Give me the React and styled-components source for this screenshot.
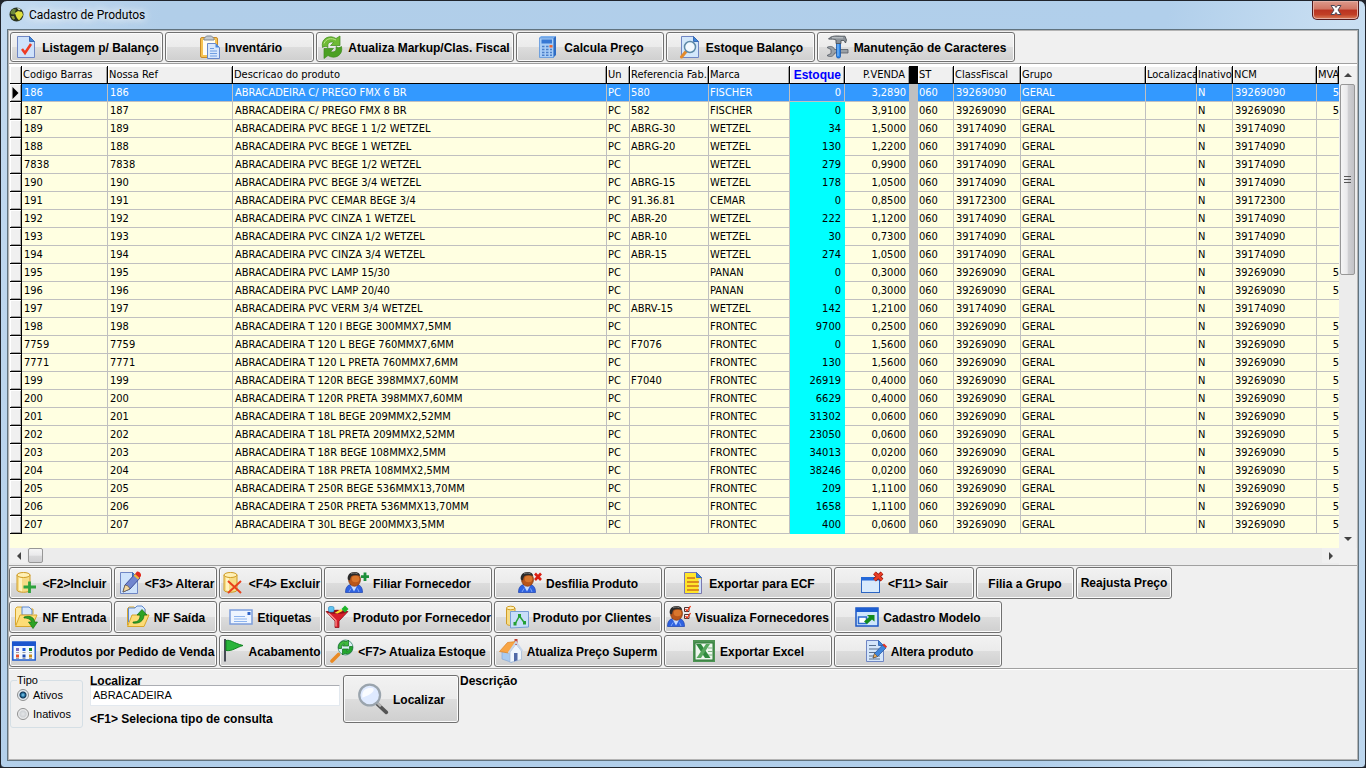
import React from 'react';
import styled, { createGlobalStyle, css } from 'styled-components';

const GlobalStyle = createGlobalStyle`
  *, *::before, *::after { box-sizing: border-box; }
  html, body { margin: 0; background: #20242c; }
  button, input { font: inherit; color: inherit; }
`;

const uiFont = '"Liberation Sans", Arial, sans-serif';
const gridFont = '"DejaVu Sans Condensed", "DejaVu Sans", Tahoma, sans-serif';

/* ---------- window frame ---------- */

const Window = styled.main`
  min-height: 100vh;
  display: flex;
  flex-direction: column;
  padding: 0 6px 6px;
  border: 1px solid #20242c;
  border-radius: 7px 7px 4px 4px;
  background: linear-gradient(100deg, #c3daf0 0, #b1cee9 160px, #b1cfeb 78%, #c9dff2 90%, #bcd6ee 100%);
  font: 12px/16px ${uiFont};
  color: #000;
`;

const TitleBar = styled.header`
  display: flex;
  align-items: flex-start;
  height: 28px;
  padding-left: 2px;
`;

const TitleText = styled.h1`
  flex: 1;
  margin: 0;
  padding: 6px 0 0 5px;
  font: 12px/16px Roboto, "Open Sans", sans-serif;
  color: #000;
  text-shadow: 0 0 8px #fff, 0 0 8px #fff;
`;

const TitleIcon = styled.span`
  display: flex;
  padding-top: 6px;
`;

const CloseButton = styled.button`
  display: flex;
  align-items: center;
  justify-content: center;
  width: 47px;
  height: 19px;
  padding: 0;
  border: 1px solid #521a1c;
  border-top: 0;
  border-radius: 0 0 5px 5px;
  box-shadow: inset 0 0 0 1px #e5aea3;
  background: linear-gradient(#dd9a8c 0, #d17563 45%, #b93321 50%, #c13f26 75%, #d9805c 100%);
`;

const Client = styled.div`
  flex: 1;
  display: flex;
  flex-direction: column;
  min-width: 0;
  border: 1px solid #61737f;
  background: #f0f0f0;
  box-shadow: inset 0 0 0 1px #b4b4b4;
  padding: 1px;
`;

/* ---------- buttons ---------- */

const PushButton = styled.button`
  display: flex;
  flex: none;
  align-items: center;
  justify-content: center;
  gap: 4px;
  width: ${(p) => p.$w}px;
  height: ${(p) => p.$h || 32}px;
  padding: 0;
  border: 1px solid #707070;
  border-radius: 3px;
  box-shadow: inset 0 0 0 1px #fbfbfb;
  background: linear-gradient(#f2f2f2 0, #ebebeb 49%, #dddddd 50%, #cfcfcf 100%);
  font: bold 12px/16px ${uiFont};
  color: #000;
  white-space: nowrap;

  svg { flex: none; display: block; }
`;

const ButtonLabel = styled.span`
  padding-top: ${(p) => (p.$raised ? 0 : 2)}px;
`;

const TopTools = styled.nav`
  display: flex;
  gap: 2px;
  padding: 1px;
  border-bottom: 1px solid #a0a0a0;
`;

const BottomTools = styled.nav`
  display: flex;
  flex-direction: column;
  gap: 2px;
  padding: 1px 0;
  border-top: 1px solid #a0a0a0;
  border-bottom: 1px solid #a0a0a0;
`;

const ToolRow = styled.div`
  display: flex;
  gap: 2px;
`;

/* ---------- data grid ---------- */

const GridFrame = styled.section`
  display: flex;
  border-top: 2px solid #fff;
  padding-left: 1px;
  background: #f0f0f0;
`;

const GridView = styled.div`
  flex: 1;
  min-width: 0;
  overflow: hidden;
  background: #ffffe1;
  padding-bottom: 14px;
`;

const Grid = styled.table`
  table-layout: fixed;
  width: 100%;
  border-spacing: 0;
  border-collapse: separate;
  font: 11px/16px ${gridFont};
`;

const HeadCell = styled.th`
  height: 18px;
  padding: 1px ${(p) => (p.$right ? 4 : 0)}px 0 1px;
  overflow: hidden;
  white-space: nowrap;
  font-weight: normal;
  text-align: ${(p) => (p.$right ? 'right' : 'left')};
  background: ${(p) => (p.$gap ? '#000' : '#f0f0f0')};
  border-right: 1px solid #000;
  border-bottom: 1px solid #000;
  ${(p) => !p.$gap && css`box-shadow: inset 1px 1px 0 #fff, inset -1px 0 0 #a0a0a0;`}
  ${(p) => p.$stock && css`
    font: bold 12px/16px ${uiFont};
    color: #00f;
    padding-right: 3px;
  `}
`;

const Cell = styled.td`
  height: 18px;
  padding: 1px 3px 0 2px;
  overflow: hidden;
  white-space: nowrap;
  text-align: ${(p) => (p.$right ? 'right' : 'left')};
  border-right: 1px solid #c0c0c0;
  border-bottom: 1px solid #c0c0c0;
  ${(p) => p.$tight && css`padding-left: 1px;`}
  ${(p) => p.$stock && css`background: #0ff; border-color: #0ff;`}
  ${(p) => p.$gap && css`background: #c0c0c0;`}
  ${(p) => p.$last && css`padding-right: 0; border-right: 0;`}
`;

const MarkCell = styled.td`
  height: 18px;
  padding: 0 0 0 2px;
  background: #f0f0f0;
  border-right: 1px solid #000;
  border-bottom: 1px solid #000;
  box-shadow: inset 1px 1px 0 #fff, inset -1px -1px 0 #a0a0a0;

  svg { display: block; }
`;

const Row = styled.tr`
  ${(p) => p.$selected && css`
    color: #fff;
    ${Cell} { background: #39f; border-color: #c0c0c0; }
    ${Cell}[data-gap] { background: #c0c0c0; }
  `}
`;

const VScroll = styled.div`
  display: flex;
  flex-direction: column;
  width: 18px;
  background: #ececec;
`;

const VThumb = styled.div`
  display: flex;
  align-items: center;
  justify-content: center;
  height: 191px;
  margin: 0 2px 0 1px;
  border: 1px solid #979797;
  border-radius: 2px;
  background: linear-gradient(90deg, #f5f5f5 0, #e9e9eb 48%, #d0d0d3 55%, #c2c2c6 100%);
`;

const Spacer = styled.div`
  flex: 1;
`;

const ScrollArrow = styled.button`
  display: flex;
  flex: none;
  align-items: center;
  justify-content: center;
  width: 17px;
  height: ${(p) => (p.$wide ? 15 : 18)}px;
  padding: 0;
  border: 0;
  background: #f0f0f0;
`;

const HScroll = styled.div`
  display: flex;
  height: 17px;
  margin-right: 18px;
  padding-left: 1px;
  background: #ececec;
`;

const HThumb = styled.div`
  width: 15px;
  height: 15px;
  margin-left: 1px;
  border: 1px solid #979797;
  border-radius: 2px;
  background: linear-gradient(#f5f5f5 0, #e9e9eb 48%, #d8d8da 55%, #cfcfd2 100%);
`;

/* ---------- search panel ---------- */

const SearchPanel = styled.form`
  flex: 1;
  display: flex;
  align-items: flex-start;
  padding: 5px 1px;
  border-top: 1px solid #fff;
`;

const TypeGroup = styled.fieldset`
  width: 73px;
  height: 53px;
  margin: 0 7px 0 0;
  padding: 0 0 0 6px;
  border: 1px solid #d5dfe5;
  border-radius: 3px;
  font: 11px/10px ${uiFont};

  legend { padding: 0 2px 0 0; }
`;

const RadioLabel = styled.label`
  display: flex;
  align-items: center;
  gap: 4px;
  height: 19px;
`;

const Radio = styled.input`
  appearance: none;
  width: 12px;
  height: 12px;
  margin: 0;
  border: 1px solid #8e8f8f;
  border-radius: 50%;
  background: radial-gradient(#e4e6e8 0, #d0d3d6 3px, #f4f4f4 5px);

  &:checked {
    background: radial-gradient(circle at 50% 50%, #8fd6f5 0, #1f6d9d 2px, #12324f 3px, #e4ecf2 4px);
  }
`;

const SearchField = styled.div`
  display: flex;
  flex-direction: column;
  width: 250px;
  margin-right: 3px;

  label, p { margin: 0; font-weight: bold; }
  label { height: 10px; line-height: 12px; }
  p { padding-top: 5px; }
`;

const SearchInput = styled.input`
  height: 21px;
  padding: 0 2px 2px;
  border: 1px solid #e3e9ef;
  border-top-color: #abadb3;
  border-radius: 1px;
  background: #fff;
  font: 11px/16px ${uiFont};
`;

const Description = styled.strong`
  padding-left: 1px;
  line-height: 12px;
`;

/* ---------- icons ---------- */

const Svg = ({ size = 24, children }) => (
  <svg width={size} height={size} viewBox="0 0 24 24" aria-hidden="true">{children}</svg>
);

const Sheet = ({ fill = '#cfe2fb' }) => (
  <>
    <path d="M3.500 1.500H15.500L20.500 6.500V22.500H3.500Z" fill={fill} stroke="#6f86c4" />
    <path d="M15.500 1.500V6.500H20.500Z" fill="#3f86d8" stroke="#3a6cb8" />
  </>
);

const Cylinder = () => (
  <>
    <path d="M3 4V19C3 22 16 22 16 19V4Z" fill="#f7dc86" stroke="#cf9c26" />
    <path d="M5 6V19L8 20.500V7Z" fill="#fff3c0" />
    <ellipse cx="9.500" cy="4" rx="6.500" ry="2.500" fill="#fff0b5" stroke="#cf9c26" />
  </>
);

const Person = () => (
  <>
    <path d="M0.500 21.500C0.500 16 3 13.500 7 13.500H11C15 13.500 17.500 16 17.500 21.500Z" fill="#2f62e0" stroke="#1a3fae" strokeWidth=".7" />
    <path d="M5.500 14H12.500L9 20.500Z" fill="#c9dcff" />
    <path d="M4 21L6 17.500M14 21L12.500 17.500" stroke="#7fa4f5" />
    <ellipse cx="9.500" cy="8.500" rx="6" ry="6.800" fill="#b9561a" stroke="#7c330c" strokeWidth=".7" />
    <ellipse cx="10.500" cy="8" rx="3.800" ry="3.200" fill="#d9762c" />
    <path d="M2.800 8.500C2 4 5 1 9.500 1C13 1 15 2.500 15.200 5C12.500 3.800 10.500 4.500 8 4.500C6 4.800 5.500 6.500 5 9.500Z" fill="#2b2a2a" />
    <path d="M6 2.800C8 1.800 10.500 1.800 12.500 2.800" fill="none" stroke="#8a8a8a" strokeWidth=".8" />
  </>
);

const Folder = ({ children }) => (
  <>
    <path d="M1.500 20V3.500L3 2H8L9.500 4H19V9" fill="#ffe9a0" stroke="#d8a62c" />
    {children}
    <path d="M1.500 21.500L6 10H23L18 21.500Z" fill="#fddc76" stroke="#d8a62c" />
  </>
);

const icons = {
  check: <><Sheet /><path d="M8 14L11 18L17 9" fill="none" stroke="#ee3b24" strokeWidth="2.500" /></>,
  clipboard: (
    <>
      <rect x="3.500" y="2.500" width="17" height="20" rx="1.500" fill="#f6c352" stroke="#c88a28" />
      <path d="M6 5H18V20H6Z" fill="#fffdf5" />
      <path d="M7 5V3.500L9.500 1H14.500L17 3.500V5Z" fill="#c3cad2" stroke="#7f8993" />
      <path d="M10.500 8.500H18.500L22.500 12.500V23.500H10.500Z" fill="#d7e7fd" stroke="#6788c9" />
      <path d="M18.500 8.500V12.500H22.500Z" fill="#4b8ade" />
      <path d="M13 13.500H17M13 16H20M13 18.500H20M13 21H20" stroke="#6f9fe2" />
    </>
  ),
  refresh: (
    <>
      <path d="M2.500 12.500C0.500 4 9 -1 16 3.500L20 1V10.500H10.500L13.500 7.500C10 6 7 8 8 12.500C6 11 4.500 11 2.500 12.500Z" fill="#6fbb35" stroke="#3d8a1c" strokeWidth=".7" />
      <path d="M21.500 11.500C23.500 20 15 25 8 20.500L4 23.500V13.500H13.500L10.500 16.500C14 18 17 16 16 11.500C18 13 19.500 13 21.500 11.500Z" fill="#4ba023" stroke="#3d8a1c" strokeWidth=".7" />
      <path d="M4 8.500C6 3.500 11 2.500 16 5" fill="none" stroke="#bce58a" />
    </>
  ),
  calculator: (
    <>
      <path d="M17 3L20 1V20L17 23Z" fill="#2f6cc4" />
      <path d="M3 3L5 1H20L17.500 3Z" fill="#7eb1ee" />
      <path d="M3.500 3H17.500V22.500H3.500Z" fill="#a9cdf6" stroke="#5b94dc" strokeWidth=".8" />
      <path d="M5.500 4.500H16V8.500H5.500Z" fill="#3778d4" />
      <path d="M6 11.500H8.500M10 11.500H12.500M6 14.500H8.500M10 14.500H12.500M14 14.500H16M6 17.500H8.500M10 17.500H12.500M14 17.500H16M6 20.300H8.500M10 20.300H12.500M14 20.300H16" stroke="#4b7fc9" strokeWidth="1.600" />
      <path d="M13.500 11.300H16.500" stroke="#f0622c" strokeWidth="2.400" />
    </>
  ),
  docSearch: (
    <>
      <Sheet fill="#d3e7fb" />
      <path d="M8 16.500L3.500 22" stroke="#e28a2c" strokeWidth="3" strokeLinecap="round" />
      <circle cx="12" cy="12" r="5.500" fill="#f2f9ff" stroke="#5e8aa8" strokeWidth="1.500" />
    </>
  ),
  tools: (
    <>
      <path d="M1 12.500C4 10.500 8 11.500 8.500 14.500H22V18H8.500C8 21.500 4 22.500 1 20.500L5 18.500V14.500Z" fill="#9aa1a8" stroke="#555c64" strokeWidth=".8" />
      <path d="M10.500 7H14.500V21.500C14.500 23.500 10.500 23.500 10.500 21.500Z" fill="#2c86e8" stroke="#1656a8" strokeWidth=".8" />
      <path d="M12 8V21" stroke="#8ec4fa" />
      <path d="M2.500 4C5 .5 11 .8 15 1.200H19L20.500 5L19.500 8L18 5.500H15V8.500H10V5C7.500 3.500 5 4.500 2.500 4Z" fill="#8b9299" stroke="#464c53" strokeWidth=".8" />
      <path d="M6 2.800H17" stroke="#d5d9dd" strokeWidth=".8" />
    </>
  ),
  add: <><Cylinder /><path d="M15.500 10.500V22M9.500 16H22" stroke="#2ea33c" strokeWidth="2.800" /></>,
  remove: <><Cylinder /><path d="M7 10L20 22M20 10L7 22" stroke="#e8401c" strokeWidth="2" /></>,
  edit: (
    <>
      <Sheet fill="#cfe3fb" />
      <path d="M6 21L8 14L18 3L23 7L13 18Z" fill="#7186cf" stroke="#40509a" />
      <path d="M6 21L8 14L11 15L13 18Z" fill="#f4d9a0" stroke="#5a4a30" strokeWidth=".6" />
      <path d="M18 3L20 .5C22 0 25 3 24 5L22.500 7Z" fill="#e12a1c" />
      <path d="M16.500 4.500L18 3L22.500 7L21 8.500Z" fill="#f2b93a" />
    </>
  ),
  userAdd: <><Person /><path d="M20 1.500V10M16 5.700H24" stroke="#1c8f3a" strokeWidth="2.800" /></>,
  userRemove: <><Person /><path d="M17 2.500L23 9M23 2.500L17 9" stroke="#dc1e12" strokeWidth="2.600" /></>,
  userList: (
    <>
      <Person />
      <path d="M17.500 2.500H22V6.500H17.500ZM17.500 9.500H22V13.500H17.500Z" fill="#fff" stroke="#4b3434" />
      <path d="M18.500 4L20 6L23.500 1M18.500 11L20 13L23.500 8" fill="none" stroke="#ee3a1a" strokeWidth="1.300" />
    </>
  ),
  ecf: (
    <>
      <path d="M3.500 1.500H15.500L20.500 6.500V22.500H3.500Z" fill="#ffe62a" stroke="#7b78b0" />
      <path d="M17.500 8V22H20V8Z" fill="#cfe2fb" />
      <path d="M15.500 1.500V6.500H20.500Z" fill="#3f86d8" stroke="#3a6cb8" />
      <path d="M6 7H14M6 11H18M6 15H18M6 19H18" stroke="#d0701a" strokeWidth="1.300" />
    </>
  ),
  exit: (
    <>
      <rect x="1.500" y="6.500" width="18" height="15" fill="#d8eafc" stroke="#2c66c4" />
      <path d="M1 6H20V9.500H1Z" fill="#2468d8" />
      <path d="M14.500 2L22 9M22 2L14.500 9" stroke="#8e160d" strokeWidth="4" />
      <path d="M14.500 2L22 9M22 2L14.500 9" stroke="#ea3c24" strokeWidth="2.400" />
    </>
  ),
  folderIn: (
    <>
      <Folder><path d="M8 10V2H15L18 5V10Z" fill="#d8e8fd" stroke="#5f88cc" /></Folder>
      <path d="M10 12C16 10 20.500 12.500 20.500 17H23.500L19 23.500L14.500 17H17.500C17 14.500 14 13 10 13Z" fill="#2da324" stroke="#157015" strokeWidth=".7" />
    </>
  ),
  folderOut: (
    <>
      <Folder><path d="M2.500 17V3H9L11 1H16L19 4V11Z" fill="#d8e8fd" stroke="#5f88cc" /></Folder>
      <path d="M7 17C13 17 14 14 14 10H11L16 4.500L21 10H18C18 16 13 19 7 18Z" fill="#2da324" stroke="#157015" strokeWidth=".7" />
    </>
  ),
  envelope: (
    <>
      <rect x="1" y="5" width="22" height="14" fill="#eef5ff" stroke="#7c9ddb" strokeWidth="1.500" />
      <path d="M5 11.500H16M5 14H18M5 16.500H18" stroke="#8db4ee" />
      <path d="M18.500 7H21.500V10H18.500Z" fill="#2d63c8" />
    </>
  ),
  funnel: (
    <>
      <path d="M1 6.500L10 16V22.500H14V16L23 6.500Z" fill="#d81f2c" stroke="#8f0f18" strokeWidth=".8" />
      <path d="M3.500 8L11 15.500V21.500" fill="none" stroke="#ff9a94" strokeWidth="1.200" />
      <ellipse cx="12" cy="6.800" rx="10" ry="2" fill="#8f0f18" />
      <rect x="3.500" y="1.500" width="5.500" height="5.500" rx="1.500" fill="#5fc3f0" stroke="#2581b8" strokeWidth=".6" />
      <path d="M9.500 8L16 4L17.500 6L12.500 8.500Z" fill="#ffe32e" />
      <path d="M20 0.500L23.500 4L20 7.500L16.500 4Z" fill="#1eb42c" />
    </>
  ),
  chart: (
    <>
      <path d="M1.500 3V19C3 21 9 21 10 19V3Z" fill="#f7dc86" stroke="#cf9c26" />
      <ellipse cx="5.700" cy="3" rx="4.200" ry="1.800" fill="#fff0b5" stroke="#cf9c26" />
      <path d="M5.500 6.500H23.500V22L5.500 23Z" fill="#c9def9" stroke="#789ed4" />
      <path d="M10 19L14.500 11L19.500 18" fill="none" stroke="#2aa43a" strokeWidth="1.500" />
      <path d="M8.500 17H11.500V20.500H8.500ZM13 9H16V12.500H13ZM18 16H21V19.500H18Z" fill="#24a034" />
    </>
  ),
  export: (
    <>
      <rect x="1" y="3" width="22" height="18" fill="#cfe6fc" stroke="#1b55c4" strokeWidth="1.500" />
      <path d="M1 3H23V7H1Z" fill="#1c5ed2" />
      <path d="M3.500 12H11.500V18.500H3.500Z" fill="#fff" stroke="#2c6cd0" strokeWidth="1.500" />
      <path d="M9 16.500L14 12L12 10H19.500V16.500L17 14.500L12 19Z" fill="#118a1c" />
    </>
  ),
  calendar: (
    <>
      <rect x=".8" y="3" width="22.400" height="18" fill="#f2f8ff" stroke="#1f5cd0" strokeWidth="1.500" />
      <path d="M0 3H24V7H0Z" fill="#1c56ce" />
      <path d="M5.500 9V12" stroke="#7d6cc0" strokeWidth="3" />
      <path d="M12 9V12" stroke="#1d58d6" strokeWidth="3" />
      <path d="M18.500 9V12" stroke="#11862b" strokeWidth="3" />
      <path d="M5.500 15.500V18.500" stroke="#e8502c" strokeWidth="3" />
      <path d="M12 15.500V18.500" stroke="#204ab0" strokeWidth="3" />
      <path d="M18.500 15.500V18.500" stroke="#c98c1a" strokeWidth="3" />
      <path d="M4 13.500H7M10.500 13.500H13.500M17 13.500H20M4 19.500H7M10.500 19.500H13.500M17 19.500H20" stroke="#777" strokeWidth=".7" />
    </>
  ),
  flag: (
    <>
      <path d="M5 0V22.500" stroke="#474b55" strokeWidth="2" />
      <path d="M6 1.500C11 .5 13 4 23 6.500C16 8.500 12 12.500 6 11.500Z" fill="#29b43a" stroke="#128423" />
    </>
  ),
  searchRefresh: (
    <>
      <path d="M8.500 15.500L2 22" stroke="#e98a24" strokeWidth="3.600" strokeLinecap="round" />
      <circle cx="15.500" cy="8.500" r="7.500" fill="#d9f0f4" stroke="#5a9a86" />
      <path d="M8.500 9.500C8 4 12 .8 17 2.500L18.500 1V7H12.500L14.500 5C12.500 4.800 11 6.500 11.500 9.500Z" fill="#3fba3e" stroke="#0d6a18" strokeWidth=".7" />
      <path d="M22.500 7.500C23 13 19 16 14 14.500L12.500 16V10H18.500L16.500 12C18.500 12 20 10.500 19.500 7.500Z" fill="#22a82e" stroke="#0d6a18" strokeWidth=".7" />
    </>
  ),
  house: (
    <>
      <path d="M3 12L9 6L13 13V23.500L3 20Z" fill="#a9cbf0" stroke="#86a8d6" strokeWidth=".7" />
      <path d="M11 23.500V13L17 5L22.500 12V20.500Z" fill="#eef5fd" stroke="#9db6d6" strokeWidth=".7" />
      <path d="M15.500 0H18.500V6H15.500Z" fill="#c04030" />
      <path d="M0.500 12.500L8.500 3.500L17 2.500L9.500 14Z" fill="#f8a545" stroke="#dd8020" strokeWidth=".7" />
      <path d="M9.500 14L17 3L23.500 12" fill="none" stroke="#c8d6ea" strokeWidth="1.800" />
      <path d="M15 14H18.500V21.200L15 22.500Z" fill="#4f69a8" />
    </>
  ),
  excel: (
    <>
      <rect x="1" y="1" width="22" height="22" fill="#4e9454" />
      <rect x="3" y="4" width="18" height="17" fill="#eef6ee" stroke="#2f7a39" />
      <path d="M16 9H21M16 12.500H21M16 16H21" stroke="#7eb283" />
      <path d="M4 5H9L18.500 19H13Z" fill="#2f8a3e" />
      <path d="M14 5H18L9 19H4.500Z" fill="#57a85e" />
    </>
  ),
  docEdit: (
    <>
      <Sheet fill="#d5e6fa" />
      <path d="M6 6.500H13M6 10H16M6 13.500H15M6 17H17M6 20H17" stroke="#58708f" />
      <path d="M10 19L11.500 14.500L19.500 6L23 9L14.500 17.500Z" fill="#3f86dc" stroke="#244f95" strokeWidth=".7" />
      <path d="M10 19L11.500 14.500L14.500 17.500Z" fill="#f3b25b" stroke="#533c20" strokeWidth=".5" />
      <path d="M19.500 6L21 4.500L24 7.500L23 9Z" fill="#e43320" />
    </>
  ),
  lens: (
    <>
      <path d="M15 15.500L22 22" stroke="#555" strokeWidth="2.800" strokeLinecap="round" />
      <path d="M15 14.500L18 17.500" stroke="#b5b5b5" strokeWidth="2" />
      <circle cx="9.500" cy="9" r="7.800" fill="#dfeaff" stroke="#9aa4ad" strokeWidth="1.700" />
      <path d="M4 9C4 5 8 3 12 4C14 6 10 9 4 11Z" fill="#fff" opacity=".85" />
    </>
  ),
};

const Icon = ({ name, size }) => <Svg size={size}>{icons[name]}</Svg>;

const arrowPaths = {
  up: 'M0 6L4 2L8 6Z',
  down: 'M0 2L4 6L8 2Z',
  left: 'M6 0L2 4L6 8Z',
  right: 'M2 0L6 4L2 8Z',
};

const Arrow = ({ dir }) => (
  <svg width="8" height="8" viewBox="0 0 8 8" aria-hidden="true"><path d={arrowPaths[dir]} fill="#444" /></svg>
);

/* ---------- data ---------- */

const topButtons = [
  ['check', 'Listagem p/ Balanço', 153],
  ['clipboard', 'Inventário', 149],
  ['refresh', 'Atualiza Markup/Clas. Fiscal', 198],
  ['calculator', 'Calcula Preço', 148],
  ['docSearch', 'Estoque Balanço', 149],
  ['tools', 'Manutenção de Caracteres', 198],
];

const bottomButtons = [
  [
    ['add', '<F2>Incluir', 103],
    ['edit', '<F3> Alterar', 103],
    ['remove', '<F4> Excluir', 103],
    ['userAdd', 'Filiar Fornecedor', 168],
    ['userRemove', 'Desfilia Produto', 168],
    ['ecf', 'Exportar para ECF', 168],
    ['exit', '<F11> Sair', 140],
    [null, 'Filia a Grupo', 98],
    [null, 'Reajusta Preço', 96, true],
  ],
  [
    ['folderIn', 'NF Entrada', 103],
    ['folderOut', 'NF Saída', 103],
    ['envelope', 'Etiquetas', 103],
    ['funnel', 'Produto por Fornecedor', 168],
    ['chart', 'Produto por Clientes', 168],
    ['userList', 'Visualiza Fornecedores', 168],
    ['export', 'Cadastro Modelo', 168],
  ],
  [
    ['calendar', 'Produtos por Pedido de Venda', 208],
    ['flag', 'Acabamento', 103],
    ['searchRefresh', '<F7> Atualiza Estoque', 168],
    ['house', 'Atualiza Preço Superm', 168],
    ['excel', 'Exportar Excel', 168],
    ['docEdit', 'Altera produto', 168],
  ],
];

const columnWidths = [12, 86, 125, 374, 23, 79, 81, 55, 65, 8, 36, 67, 125, 51, 36, 84];

const products = [
  ['186', 'C/ PREGO FMX 6 BR', '580', 'FISCHER', '0', '3,2890', '39269090'],
  ['187', 'C/ PREGO FMX 8 BR', '582', 'FISCHER', '0', '3,9100', '39269090'],
  ['189', 'PVC BEGE 1 1/2 WETZEL', 'ABRG-30', 'WETZEL', '34', '1,5000', '39174090'],
  ['188', 'PVC BEGE 1 WETZEL', 'ABRG-20', 'WETZEL', '130', '1,2200', '39174090'],
  ['7838', 'PVC BEGE 1/2 WETZEL', '', 'WETZEL', '279', '0,9900', '39174090'],
  ['190', 'PVC BEGE 3/4 WETZEL', 'ABRG-15', 'WETZEL', '178', '1,0500', '39174090'],
  ['191', 'PVC CEMAR BEGE 3/4', '91.36.81', 'CEMAR', '0', '0,8500', '39172300'],
  ['192', 'PVC CINZA 1 WETZEL', 'ABR-20', 'WETZEL', '222', '1,1200', '39174090'],
  ['193', 'PVC CINZA 1/2 WETZEL', 'ABR-10', 'WETZEL', '30', '0,7300', '39174090'],
  ['194', 'PVC CINZA 3/4 WETZEL', 'ABR-15', 'WETZEL', '274', '1,0500', '39174090'],
  ['195', 'PVC LAMP 15/30', '', 'PANAN', '0', '0,3000', '39269090'],
  ['196', 'PVC LAMP 20/40', '', 'PANAN', '0', '0,3000', '39269090'],
  ['197', 'PVC VERM 3/4 WETZEL', 'ABRV-15', 'WETZEL', '142', '1,2100', '39174090'],
  ['198', 'T 120 I BEGE 300MMX7,5MM', '', 'FRONTEC', '9700', '0,2500', '39269090'],
  ['7759', 'T 120 L BEGE 760MMX7,6MM', 'F7076', 'FRONTEC', '0', '1,5600', '39269090'],
  ['7771', 'T 120 L PRETA 760MMX7,6MM', '', 'FRONTEC', '130', '1,5600', '39269090'],
  ['199', 'T 120R BEGE 398MMX7,60MM', 'F7040', 'FRONTEC', '26919', '0,4000', '39269090'],
  ['200', 'T 120R PRETA 398MMX7,60MM', '', 'FRONTEC', '6629', '0,4000', '39269090'],
  ['201', 'T 18L BEGE 209MMX2,52MM', '', 'FRONTEC', '31302', '0,0600', '39269090'],
  ['202', 'T 18L PRETA 209MMX2,52MM', '', 'FRONTEC', '23050', '0,0600', '39269090'],
  ['203', 'T 18R BEGE 108MMX2,5MM', '', 'FRONTEC', '34013', '0,0200', '39269090'],
  ['204', 'T 18R PRETA 108MMX2,5MM', '', 'FRONTEC', '38246', '0,0200', '39269090'],
  ['205', 'T 250R BEGE 536MMX13,70MM', '', 'FRONTEC', '209', '1,1100', '39269090'],
  ['206', 'T 250R PRETA 536MMX13,70MM', '', 'FRONTEC', '1658', '1,1100', '39269090'],
  ['207', 'T 30L BEGE 200MMX3,5MM', '', 'FRONTEC', '400', '0,0600', '39269090'],
];

/* ---------- parts ---------- */

const ToolButtons = ({ items, height }) =>
  items.map(([icon, label, width, raised]) => (
    <PushButton key={label} type="button" $w={width} $h={height}>
      {icon && <Icon name={icon} />}
      <ButtonLabel $raised={raised}>{label}</ButtonLabel>
    </PushButton>
  ));

const ProductRow = ({ data, selected }) => {
  const [code, name, ref, brand, stock, price, ncm] = data;
  return (
    <Row $selected={selected}>
      <MarkCell>
        {selected && (
          <svg width="7" height="12" viewBox="0 0 7 12" aria-hidden="true"><path d="M0.500 0L6.500 6L0.500 12Z" /></svg>
        )}
      </MarkCell>
      <Cell>{code}</Cell>
      <Cell>{code}</Cell>
      <Cell>{`ABRACADEIRA ${name}`}</Cell>
      <Cell $tight>PC</Cell>
      <Cell $tight>{ref}</Cell>
      <Cell $tight>{brand}</Cell>
      <Cell $right $stock>{stock}</Cell>
      <Cell $right>{price}</Cell>
      <Cell $gap data-gap />
      <Cell $tight>060</Cell>
      <Cell>{ncm}</Cell>
      <Cell $tight>GERAL</Cell>
      <Cell />
      <Cell $tight>N</Cell>
      <Cell>{ncm}</Cell>
      <Cell $right $last>{ncm === '39269090' ? '5' : ''}</Cell>
    </Row>
  );
};

export default function App() {
  return (
    <>
      <GlobalStyle />
      <Window>
        <TitleBar>
          <TitleIcon>
            <svg width="15" height="15" viewBox="0 0 15 15" aria-hidden="true">
              <circle cx="7.500" cy="7.500" r="7" fill="#2a3320" />
              <path d="M1.500 5L4 2L7 2.500L6 5L7 7L4 7.500L2 7Z" fill="#6f8a3c" />
              <path d="M6 6L9 4L13 5L14 8L12 11L10 13.500L8 11L7 9Z" fill="#dfe03c" />
              <path d="M2 9L5 9L6 12L4 12.500Z" fill="#8c9c3a" />
              <path d="M8 1L12 2L10 3.500Z" fill="#e8efe0" />
            </svg>
          </TitleIcon>
          <TitleText>Cadastro de Produtos</TitleText>
          <CloseButton type="button" aria-label="Fechar">
            <svg width="12" height="10" viewBox="0 0 12 10" aria-hidden="true">
              <path d="M1 .5H4.500L6 2.500L7.500 .5H11L8 5L11 9.500H7.500L6 7.500L4.500 9.500H1L4 5Z" fill="#fff" stroke="#4d4756" />
            </svg>
          </CloseButton>
        </TitleBar>

        <Client>
          <TopTools>
            <ToolButtons items={topButtons} height={30} />
          </TopTools>

          <GridFrame>
            <GridView>
              <Grid>
                <colgroup>
                  {columnWidths.map((w, i) => <col key={i} width={w} />)}
                  <col />
                </colgroup>
                <thead>
                  <tr>
                    <HeadCell />
                    <HeadCell>Codigo Barras</HeadCell>
                    <HeadCell>Nossa Ref</HeadCell>
                    <HeadCell>Descricao do produto</HeadCell>
                    <HeadCell>Un</HeadCell>
                    <HeadCell>Referencia Fab.</HeadCell>
                    <HeadCell>Marca</HeadCell>
                    <HeadCell $right $stock>Estoque</HeadCell>
                    <HeadCell $right>P.VENDA</HeadCell>
                    <HeadCell $gap />
                    <HeadCell>ST</HeadCell>
                    <HeadCell>ClassFiscal</HeadCell>
                    <HeadCell>Grupo</HeadCell>
                    <HeadCell>Localizaca</HeadCell>
                    <HeadCell>Inativo</HeadCell>
                    <HeadCell>NCM</HeadCell>
                    <HeadCell>MVA</HeadCell>
                  </tr>
                </thead>
                <tbody>
                  {products.map((p, i) => <ProductRow key={p[0]} data={p} selected={i === 0} />)}
                </tbody>
              </Grid>
            </GridView>
            <VScroll>
              <ScrollArrow type="button" aria-label="Rolar para cima"><Arrow dir="up" /></ScrollArrow>
              <VThumb>
                <svg width="8" height="8" viewBox="0 0 8 8" aria-hidden="true">
                  <path d="M0 .5H7M0 3.500H7M0 6.500H7" stroke="#555" />
                </svg>
              </VThumb>
              <Spacer />
              <ScrollArrow type="button" aria-label="Rolar para baixo"><Arrow dir="down" /></ScrollArrow>
            </VScroll>
          </GridFrame>
          <HScroll>
            <ScrollArrow type="button" $wide aria-label="Rolar para a esquerda"><Arrow dir="left" /></ScrollArrow>
            <HThumb />
            <Spacer />
            <ScrollArrow type="button" $wide aria-label="Rolar para a direita"><Arrow dir="right" /></ScrollArrow>
          </HScroll>

          <BottomTools>
            {bottomButtons.map((row, i) => (
              <ToolRow key={i}><ToolButtons items={row} /></ToolRow>
            ))}
          </BottomTools>

          <SearchPanel onSubmit={(e) => e.preventDefault()}>
            <TypeGroup>
              <legend>Tipo</legend>
              <RadioLabel><Radio type="radio" name="tipo" defaultChecked />Ativos</RadioLabel>
              <RadioLabel><Radio type="radio" name="tipo" />Inativos</RadioLabel>
            </TypeGroup>
            <SearchField>
              <label htmlFor="localizar">Localizar</label>
              <SearchInput id="localizar" type="text" defaultValue="ABRACADEIRA" />
              <p>&lt;F1&gt; Seleciona tipo de consulta</p>
            </SearchField>
            <PushButton type="submit" $w={116} $h={48}>
              <Icon name="lens" size={32} />
              <ButtonLabel>Localizar</ButtonLabel>
            </PushButton>
            <Description>Descrição</Description>
          </SearchPanel>
        </Client>
      </Window>
    </>
  );
}
